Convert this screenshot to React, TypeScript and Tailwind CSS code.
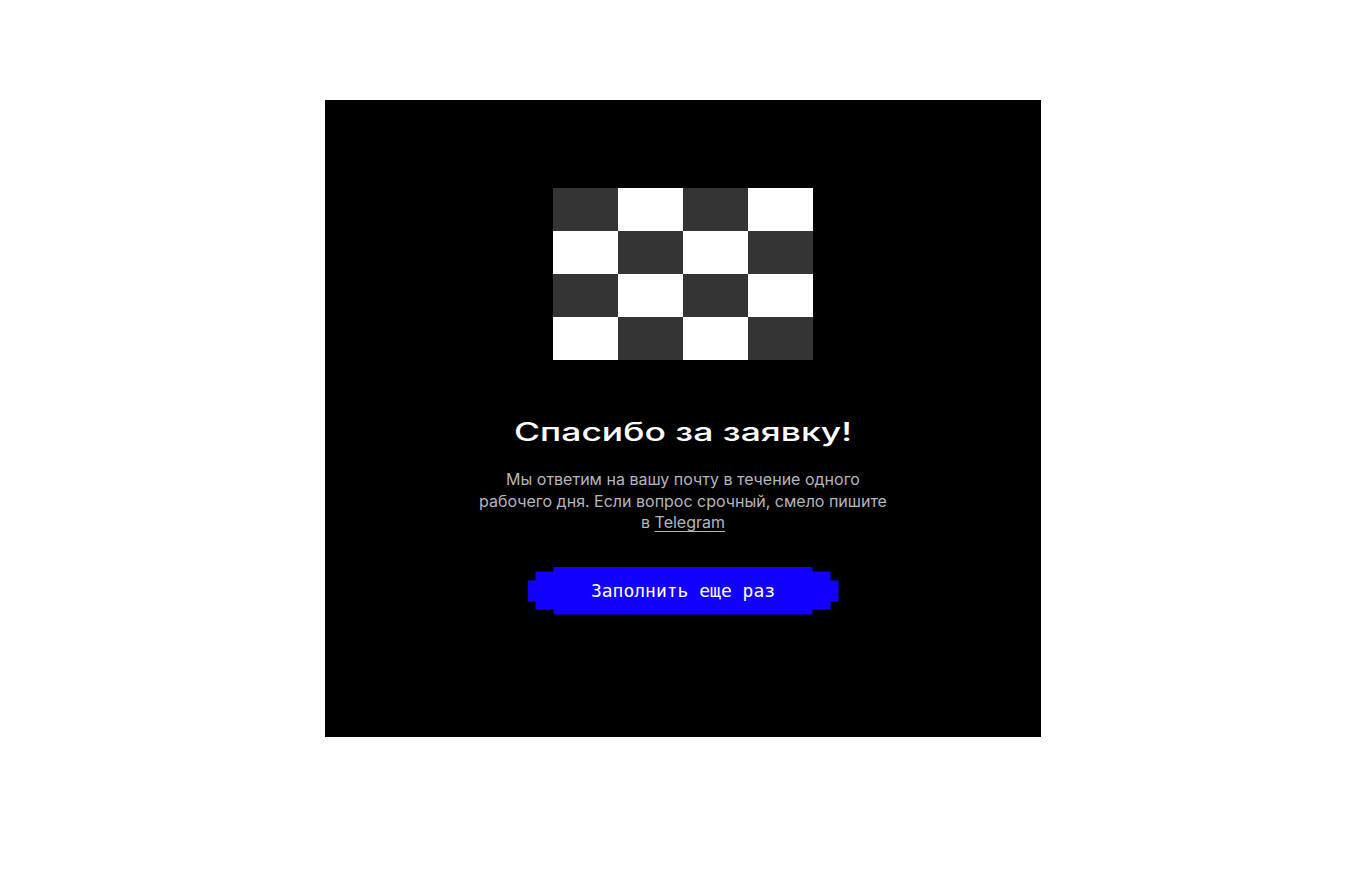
import React from "react";

const cells = Array.from({ length: 16 }, (_, i) => {
  const r = Math.floor(i / 4);
  const c = i % 4;
  return (r + c) % 2 === 0;
});

export default function App() {
  return (
    <div className="min-h-[877px] w-full bg-white pt-[100px]">
      <div className="mx-auto flex h-[637px] w-[716px] flex-col items-center bg-black pt-[88px]">
        <div className="grid h-[172px] w-[260px] grid-cols-4 grid-rows-4">
          {cells.map((dark, i) => (
            <div key={i} className={dark ? "bg-[#343434]" : "bg-white"} />
          ))}
        </div>
        <h1 className="mt-[60px] inline-block origin-center scale-x-[1.42] whitespace-nowrap text-[25px] font-medium leading-[25px] text-white [font-family:Inter,sans-serif]">
          Спасибо за заявку!
        </h1>
        <p className="mt-[24px] text-center text-[16px] leading-[21.5px] text-[#b4b6bd] [font-family:Inter,'Noto_Sans',sans-serif]">
          <span className="block whitespace-nowrap">Мы ответим на вашу почту в течение одного</span>
          <span className="block whitespace-nowrap">рабочего дня. Если вопрос срочный, смело пишите</span>
          <span className="block whitespace-nowrap">
            в <a href="#" className="underline underline-offset-[3px]">Telegram</a>
          </span>
        </p>
        <button
          type="button"
          className="mt-[33px] flex h-[48px] w-[311px] items-center justify-center bg-[#1200ff] text-[18px] leading-none text-white [clip-path:polygon(26px_0,285px_0,285px_5px,303px_5px,303px_14px,311px_14px,311px_35px,303px_35px,303px_43px,285px_43px,285px_48px,26px_48px,26px_43px,8px_43px,8px_35px,0_35px,0_14px,8px_14px,8px_5px,26px_5px)] [font-family:'DejaVu_Sans_Mono',monospace]"
        >
          Заполнить еще раз
        </button>
      </div>
    </div>
  );
}
